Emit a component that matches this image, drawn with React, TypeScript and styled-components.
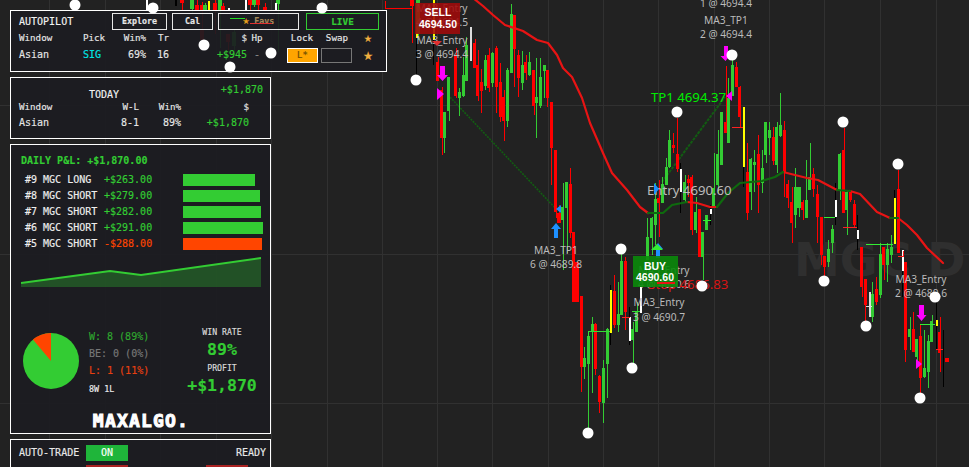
import React from "react";
import styled, { createGlobalStyle } from "styled-components";

const GlobalStyle = createGlobalStyle`
  html, body { margin: 0; padding: 0; background: #222222; }
  body { width: 969px; height: 467px; overflow: hidden; }
`;

const GREEN = "#33cc33";
const ORANGE = "#ff4500";
const MONO = `"DejaVu Sans Mono", "Liberation Mono", monospace`;

// x, wick top, wick bottom, body top, body bottom, colour
type Candle = [number, number, number, number, number, "r" | "g"];

const candles: Candle[] = [
  // strip above and behind the autopilot panel
  [182, -2, 10, -2, 3, "r"], [192, -2, 14, -2, 9, "g"], [197, -2, 11, 5, 10, "r"], [202, 2, 30, 5, 10, "r"],
  [205, 3, 11, 5, 10, "g"], [215, -2, 34, 3, 10, "r"], [220, -2, 48, -2, 10, "g"], [223, 3, 11, 6, 10, "r"],
  [250, -2, 10, -2, 5, "r"], [254, -2, 7, -2, 5, "g"], [258, -2, 12, -2, 5, "r"], [265, 3, 11, 7, 10, "r"], [278, -2, 52, -2, 4, "g"],
  [202, 30, 50, 30, 40, "r"], [234, 30, 55, 32, 46, "g"], [228, 34, 50, 34, 42, "r"],
  // left cluster
  [412, -2, 43, -2, 6, "r"], [418, -2, 40, -2, 34, "g"], [437.6, 57, 81, 62, 81, "r"], [441.7, 87, 155, 90, 138, "r"],
  [444.3, 112, 153, 112, 138, "g"], [448.7, 77, 121, 77, 111, "g"], [455.7, 48, 98, 55, 96, "r"], [459.3, 88, 116, 92, 98, "g"],
  [463.3, 57, 97, 75, 96, "g"], [466.3, 37, 81, 45, 81, "g"], [474.7, 39, 68, 43, 68, "r"], [477.7, 50, 101, 65, 96, "r"],
  [481.3, 69, 113, 82, 91, "r"], [485.3, 55, 90, 60, 86, "g"], [488.7, 48, 92, 55, 88, "r"], [492.3, 52, 87, 53, 83, "g"],
  [496.3, 46, 113, 48, 87, "r"], [500.3, 63, 122, 82, 117, "r"], [503.7, 90, 141, 97, 121, "r"], [507.3, 68, 127, 70, 121, "g"],
  [511.3, 4, 73, 14, 73, "g"], [514.3, 15, 87, 15, 49, "r"], [518.3, 50, 97, 55, 78, "r"], [522.3, 51, 90, 65, 83, "g"],
  [525.7, 55, 80, 62, 73, "r"], [529.3, 52, 76, 62, 75, "g"], [533.7, 70, 115, 70, 106, "r"], [536.3, 58, 138, 97, 103, "g"],
  [540.3, 58, 108, 77, 106, "g"], [544.3, 65, 98, 65, 71, "g"], [547.3, 70, 107, 70, 98, "r"], [551.3, 102, 185, 102, 148, "r"],
  [555.7, 150, 218, 150, 212, "r"], [559, 205, 223, 213, 223, "r"], [562.7, 183, 270, 207, 220, "g"], [566.5, 182, 253, 182, 208, "g"],
  [570.3, 168, 238, 184, 233, "r"], [573.3, 232, 302, 232, 302, "r"], [577, 262, 302, 262, 302, "r"],
  // dip
  [581.3, 296, 392, 296, 367, "r"], [584.3, 347, 379, 358, 367, "g"], [588.3, 336, 428, 336, 364, "g"], [592.3, 317, 393, 324, 332, "g"],
  [595.3, 323, 375, 324, 369, "r"], [599.3, 375, 413, 376, 402, "r"], [603.3, 360, 423, 368, 403, "g"], [607.3, 328, 398, 329, 364, "g"],
  [614.3, 275, 328, 291, 325, "r"], [618.3, 282, 332, 314, 325, "g"], [621.3, 254, 315, 261, 315, "g"], [625.3, 257, 330, 261, 312, "r"],
  [632.7, 322, 363, 329, 340, "g"], [636.7, 302, 332, 311, 332, "g"],
  // recovery
  [647.3, 218, 260, 237, 260, "g"], [651.7, 217, 255, 218, 238, "g"], [655.3, 183, 245, 199, 225, "g"], [658.7, 180, 237, 198, 203, "r"],
  [662.3, 177, 203, 184, 203, "g"], [666.3, 158, 185, 167, 185, "g"], [669.3, 130, 168, 140, 167, "g"], [673.3, 133, 153, 145, 148, "r"],
  [677.3, 118, 172, 154, 169, "r"], [684.7, 175, 203, 182, 200, "g"], [688.3, 175, 197, 179, 183, "r"], [691.7, 175, 235, 177, 230, "r"],
  [695.7, 197, 233, 212, 230, "g"], [699.3, 209, 257, 209, 257, "r"], [702.7, 232, 280, 232, 257, "g"], [706.3, 215, 230, 215, 230, "g"],
  [713.7, 153, 207, 188, 207, "g"], [717.7, 130, 193, 154, 185, "g"], [721.3, 112, 165, 112, 165, "g"], [725.7, 66, 133, 122, 133, "r"],
  [728.3, 78, 143, 98, 143, "g"], [732.3, 60, 96, 65, 96, "g"], [736.3, 62, 87, 67, 87, "r"], [739.7, 86, 127, 87, 117, "r"],
  // middle
  [747.3, 143, 220, 172, 213, "r"], [750.7, 158, 210, 159, 192, "g"], [754.3, 150, 192, 162, 165, "g"], [758.3, 135, 213, 154, 185, "r"],
  [762.3, 150, 193, 168, 183, "g"], [765.7, 122, 163, 122, 155, "g"], [769.3, 122, 155, 130, 138, "g"], [773.3, 127, 165, 137, 161, "r"],
  [776.7, 122, 173, 127, 165, "g"], [780.3, 93, 137, 125, 136, "g"], [784.3, 121, 197, 130, 173, "r"], [787.7, 180, 208, 184, 198, "r"],
  [791.7, 187, 243, 202, 223, "r"], [795.3, 168, 228, 187, 215, "g"], [799, 187, 217, 187, 208, "g"], [802.7, 200, 220, 202, 210, "r"],
  [806.3, 160, 218, 200, 218, "g"], [809.7, 143, 190, 177, 190, "g"], [813.3, 168, 197, 174, 189, "r"], [817.3, 185, 243, 194, 217, "r"],
  [821.3, 217, 265, 217, 255, "r"], [824.3, 256, 278, 256, 267, "r"], [828.3, 240, 267, 249, 262, "g"], [832.3, 225, 253, 229, 243, "g"],
  [839.7, 153, 200, 154, 191, "g"], [843.7, 128, 213, 150, 213, "r"], [846.7, 190, 235, 192, 210, "g"], [850.3, 190, 202, 191, 200, "r"],
  [854.3, 200, 227, 204, 225, "r"], [898.3, 170, 253, 189, 253, "r"],
  // right cluster
  [861.7, 247, 297, 247, 287, "r"], [865.3, 279, 323, 279, 305, "r"], [872.3, 282, 322, 294, 317, "g"], [876.3, 277, 305, 289, 302, "r"],
  [880.3, 243, 298, 254, 295, "g"], [883.7, 247, 280, 247, 265, "r"], [887.3, 243, 282, 249, 265, "g"], [891.3, 235, 263, 247, 255, "g"],
  [905.3, 262, 362, 262, 350, "r"], [909.7, 317, 350, 329, 337, "g"], [913.3, 312, 352, 329, 352, "r"], [916.7, 339, 367, 339, 357, "g"],
  [920.3, 325, 393, 336, 378, "r"], [924.3, 330, 378, 368, 377, "g"], [928.3, 335, 388, 341, 372, "g"], [931.7, 315, 342, 321, 342, "g"],
  [939.7, 317, 372, 332, 353, "r"],
];

// x, dark top, dark bottom, inner top, inner bottom, inner colour
const ticks: [number, number, number, number, number, string][] = [
  [146, -2, 10, -2, 10, "#ffffff"], [175, -2, 6, -2, 6, "#000000"], [208, 1, 14, 1, 10, "#ffff00"], [228, 8, 16, 8, 11, "#ffffff"],
  [245, -2, 10, -2, 10, "#ffffff"], [275, 3, 22, 3, 10, "#ffffff"],
  [416, 34, 80, 33, 38, "#ffff00"], [433, 40, 65, 0, 40, "#ffff00"], [470, 27, 61, 27, 61, "#dddddd"],
  [610, 285, 345, 290, 333, "#ffff00"], [629, 307, 345, 317, 341, "#ffffff"], [640, 287, 313, 287, 313, "#ffffff"],
  [680, 163, 213, 169, 192, "#ffffff"], [710, 205, 225, 209, 214, "#ffffff"], [743, 107, 187, 107, 167, "#ffff00"],
  [835, 183, 225, 200, 217, "#ffffff"], [857, 215, 250, 230, 239, "#ffffff"], [894, 190, 244, 198, 244, "#ffff00"],
  [902, 250, 297, 250, 271, "#ffffff"], [869, 292, 317, 292, 317, "#dddddd"], [936, 297, 350, 320, 326, "#ffff00"], [943, 330, 387, 330, 330, "#000000"],
];

const segments: [number, number, number, number, string][] = [
  [385, 8, 412, 8, "#ff0000"], [385, 0, 385, 8, "#ff0000"], [588, 331, 610, 331, "#33dd33"], [588, 331, 588, 336, "#33dd33"],
  [622, 317, 630, 317, "#ff2020"], [632, 311, 640, 311, "#33dd33"], [703, 220, 711, 220, "#33ee33"], [706, 217, 706, 223, "#33ee33"],
  [732, 127, 743, 127, "#ff2020"], [824, 217, 835, 217, "#33ee33"], [843, 227, 857, 227, "#ff2020"], [866, 244, 893, 244, "#33ee33"],
  [898, 256, 903, 256, "#ff2020"], [903, 256, 903, 250, "#ff2020"], [920, 324, 935, 324, "#33ee33"], [936, 349, 943, 349, "#ff2020"],
  [866, 306, 872, 306, "#dddddd"],
];

const maRedA = "473,-2 483,6 493,15 505,25 523,31 537,40 548,43 557,55 563,68 572,77 582,98 590,123 603,153 612,173 627,190 640,207 648,213";
const maGreenA = "648,213 663,213 672,205 687,202";
const maRedB = "687,202 697,203 710,207 717,207";
const maGreenB = "717,207 728,193 740,183 762,181 775,177 783,172";
const maRedC = "783,172 807,178 818,180 837,190";
const maGreenC = "837,190 850,191";
const maRedD = "850,191 860,194 877,212 890,218";
const maGreenD = "890,218 898,218";
const maRedE = "898,218 907,225 917,235 927,248 943,263";

const gridX = [49, 105, 160, 216, 271, 327, 382, 437, 492, 548, 603, 658, 714, 769, 824, 880, 936];
const gridY = [105, 254, 403];

const dots = [
  [75, 5], [153, 8], [322, 8], [204, 45], [271, 53], [230, 67], [416, 80], [677, 112], [732, 55], [843, 122], [898, 164],
  [824, 281], [866, 326], [920, 398], [935, 297], [702, 286], [621, 249], [632, 368], [588, 433],
];

const chartLabels: [number, number, string][] = [
  [442, 12, "MA3_Entry"], [442, 26, "4 @ 4694.5"], [442, 44, "MA3_Entry"], [442, 58, "3 @ 4694.4"],
  [726, 7, "1 @ 4694.4"], [726, 24, "MA3_TP1"], [726, 38, "2 @ 4694.4"],
  [556, 254, "MA3_TP1"], [556, 268, "6 @ 4689.8"], [664, 274, "MA3_Entry"], [664, 288, "4 @ 4690.6"],
  [659, 306, "MA3_Entry"], [659, 321, "3 @ 4690.7"], [921, 283, "MA3_Entry"], [921, 297, "2 @ 4689.6"],
];

const bars = [
  { label: "#9 MGC LONG", amount: "+$263.00", width: 72, loss: false },
  { label: "#8 MGC SHORT", amount: "+$279.00", width: 77, loss: false },
  { label: "#7 MGC SHORT", amount: "+$282.00", width: 78, loss: false },
  { label: "#6 MGC SHORT", amount: "+$291.00", width: 80, loss: false },
  { label: "#5 MGC SHORT", amount: "-$288.00", width: 79, loss: true },
];

const Page = styled.div`
  position: relative;
  width: 969px;
  height: 467px;
  overflow: hidden;
  background: #222222;
  font-family: ${MONO};
`;

const ChartSvg = styled.svg`
  position: absolute;
  inset: 0;
`;

const OverlaySvg = styled.svg`
  position: absolute;
  inset: 0;
  z-index: 3;
  pointer-events: none;
`;

const Sidebar = styled.div`
  position: absolute;
  top: 10px;
  left: 10px;
  z-index: 2;
  display: flex;
  flex-direction: column;
  align-items: flex-start;
  gap: 5px;
`;

const Panel = styled.div<{ $w?: number; $h: number }>`
  box-sizing: border-box;
  width: ${(p) => p.$w ?? 261}px;
  height: ${(p) => p.$h}px;
  flex: none;
  border: 1px solid #ffffff;
  background: rgba(28, 28, 33, 0.93);
  color: #eeeeee;
  font-size: 10px;
  line-height: 12px;
  -webkit-text-stroke: 0.15px currentColor;
`;

const PilotTop = styled.div`
  display: flex;
  align-items: center;
  height: 17px;
  margin: 2px 0 0 8px;
`;

const PilotTitle = styled.div`
  width: 93px;
  color: #f2f2f2;
`;

const TopButton = styled.div<{ $w: number; $live?: boolean; $faded?: boolean; $gap?: number }>`
  box-sizing: border-box;
  width: ${(p) => p.$w}px;
  height: 17px;
  margin-right: ${(p) => p.$gap ?? 5}px;
  border: 1px solid ${(p) => (p.$live ? GREEN : "#e8e8e8")};
  color: ${(p) => (p.$live ? GREEN : p.$faded ? "#a58a5c" : "#e8e8e8")};
  font-size: ${(p) => (p.$live ? 9.4 : 8.3)}px;
  font-weight: bold;
  line-height: 15px;
  text-align: center;
  white-space: nowrap;
`;

const FavStar = styled.span`
  font-size: 11px;
  line-height: 10px;
  color: #e6a21e;
`;

const PilotGrid = styled.div`
  display: grid;
  grid-template-columns: 64px 37px 26px 23px 78px 20px 51px 34px 32px;
  grid-template-rows: 13px 16px;
  row-gap: 3px;
  align-items: center;
  margin: 1px 0 0 8px;
`;

const Head = styled.div<{ $align?: string; $inset?: number }>`
  padding-right: ${(p) => p.$inset ?? 0}px;
  font-size: 9.2px;
  color: #e6e6e6;
  text-align: ${(p) => p.$align ?? "left"};
  white-space: nowrap;
`;

const Cell = styled.div<{ $align?: string; $tone?: string }>`
  color: ${(p) => p.$tone ?? "#e6e6e6"};
  text-align: ${(p) => p.$align ?? "left"};
  white-space: nowrap;
`;

const LockBox = styled.div`
  justify-self: end;
  box-sizing: border-box;
  width: 31px;
  height: 15px;
  border: 1px solid #ffffff;
  background: #ffa500;
  color: #6b4a00;
  font-size: 9px;
  line-height: 13px;
  text-align: center;
`;

const SwapBox = styled.div`
  justify-self: end;
  box-sizing: border-box;
  width: 31px;
  height: 15px;
  border: 1px solid #777777;
`;

const Star = styled.div<{ $size: number }>`
  color: #f0b040;
  font-size: ${(p) => p.$size}px;
  line-height: 12px;
  text-align: center;
`;

const TodayTop = styled.div`
  display: flex;
  justify-content: space-between;
  padding: 6px 7px 0 78px;
  height: 14px;
`;

const TodayTitle = styled.div`
  margin-top: 5px;
  color: #f2f2f2;
`;

const TodayTotal = styled.div`
  color: ${GREEN};
`;

const TodayGrid = styled.div`
  display: grid;
  grid-template-columns: 60px 60px 42px 68px;
  grid-template-rows: 13px 16px;
  row-gap: 2px;
  align-items: center;
  margin: 2px 0 0 8px;
`;

const DailyTitle = styled.div`
  padding: 10px 0 0 10px;
  color: ${GREEN};
  font-weight: bold;
`;

const BarList = styled.div`
  display: flex;
  flex-direction: column;
  gap: 4px;
  margin: 7px 0 0 14px;
`;

const BarRow = styled.div`
  display: grid;
  grid-template-columns: 79px 79px 1fr;
  align-items: center;
  height: 12px;
`;

const BarLabel = styled.div`
  color: #eeeeee;
  white-space: nowrap;
`;

const BarAmount = styled.div<{ $loss: boolean }>`
  color: ${(p) => (p.$loss ? ORANGE : GREEN)};
`;

const BarFill = styled.div<{ $loss: boolean }>`
  height: 12px;
  background: ${(p) => (p.$loss ? ORANGE : GREEN)};
`;

const Spark = styled.svg`
  display: block;
  margin: 7px 0 0 10px;
`;

const StatsRow = styled.div`
  display: flex;
  align-items: flex-start;
  margin-top: 38px;
`;

const Pie = styled.svg`
  flex: none;
  margin: 8px 0 0 12px;
`;

const Legend = styled.div`
  display: flex;
  flex-direction: column;
  width: 91px;
  margin: 5px 0 0 10px;
`;

const LegendLine = styled.div<{ $tone: string }>`
  height: 17px;
  line-height: 14px;
  color: ${(p) => p.$tone};
  white-space: nowrap;
`;

const Tally = styled.div`
  margin-top: 1px;
  font-size: 8.4px;
  line-height: 14px;
  color: #eeeeee;
`;

const Rates = styled.div`
  display: flex;
  flex-direction: column;
  align-items: center;
  width: 84px;
  margin-top: 2px;
`;

const RateLabel = styled.div`
  font-size: 8.2px;
  line-height: 10px;
  color: #dddddd;
  white-space: nowrap;
`;

const RateValue = styled.div`
  margin: 3px 0;
  font-size: 16.5px;
  font-weight: bold;
  line-height: 20px;
  color: ${GREEN};
  white-space: nowrap;
`;

const Logo = styled.div`
  margin-top: 13px;
  padding-left: 1px;
  text-align: center;
  font-size: 18px;
  font-weight: bold;
  line-height: 18px;
  letter-spacing: 1.2px;
  color: #ffffff;
  -webkit-text-stroke: 1px #ffffff;
`;

const TradeRow = styled.div`
  display: grid;
  grid-template-columns: 67px 42px 1fr;
  align-items: center;
  height: 16px;
  margin: 5px 4px 0 8px;
  color: #e8e8e8;
`;

const OnButton = styled.div`
  height: 16px;
  background: #1fb53a;
  color: #ffffff;
  line-height: 15px;
  text-align: center;
`;

const ReadyText = styled.div`
  text-align: right;
`;

const ActionRow = styled.div`
  display: flex;
  gap: 78px;
  margin: 4px 0 0 75px;
`;

const ActionButton = styled.div`
  width: 42px;
  height: 16px;
  background: #aa2222;
`;

const ChartLabel = styled.text`
  font-family: "Noto Sans", "Open Sans", sans-serif;
  font-size: 10.2px;
  fill: #bbbbbb;
  text-anchor: middle;
`;

const PriceLabel = styled.text<{ $tone: string }>`
  font-family: "Noto Sans", "Open Sans", sans-serif;
  font-size: 13.2px;
  fill: ${(p) => p.$tone};
`;

const Watermark = styled.text`
  font-family: "DejaVu Sans", sans-serif;
  font-size: 46px;
  font-weight: bold;
  fill: #2f2f2f;
`;

const FlagText = styled.text`
  font-family: "Liberation Sans", sans-serif;
  font-size: 10.5px;
  font-weight: bold;
  fill: #ffffff;
  text-anchor: middle;
`;

function Chart() {
  return (
    <ChartSvg width={969} height={467} viewBox="0 0 969 467">
      <g stroke="#313131" strokeWidth={1} shapeRendering="crispEdges">
        {gridX.map((x) => (
          <line key={x} x1={x + 0.5} y1={0} x2={x + 0.5} y2={467} />
        ))}
        {gridY.map((y) => (
          <line key={y} x1={0} y1={y + 0.5} x2={969} y2={y + 0.5} />
        ))}
      </g>
      <Watermark x={794} y={276}>MGC DEMO</Watermark>

      <g stroke="#125c12" strokeWidth={1.6} fill="none">
        <line x1={448} y1={95} x2={557} y2={210} strokeDasharray="2 1" />
        <line x1={662} y1={182} x2={725} y2={97} strokeWidth={2} strokeDasharray="3 1" />
      </g>

      <g shapeRendering="crispEdges">
        {candles.map(([x, wt, wb, bt, bb, c], i) => {
          const color = c === "r" ? "#ff0000" : GREEN;
          const left = Math.round(x - 1.75);
          const right = Math.round(x + 1.75);
          return (
            <g key={i} fill={color}>
              <rect x={Math.round(x)} y={wt} width={1} height={wb - wt} />
              <rect x={left} y={bt} width={right - left} height={bb - bt} />
            </g>
          );
        })}
        {ticks.map(([x, t, b, it, ib, c], i) => (
          <g key={i}>
            <rect x={x} y={t} width={1} height={b - t} fill="#000000" />
            <rect x={x} y={it} width={2} height={ib - it} fill={c} />
          </g>
        ))}
        {segments.map(([x1, y1, x2, y2, c], i) => (
          <line key={i} x1={x1} y1={y1 + 0.5} x2={x2} y2={y2 + 0.5} stroke={c} strokeWidth={1} />
        ))}
        <rect x={945} y={358} width={4} height={4} fill="#ff0000" />
      </g>

      <g fill="none" strokeWidth={2.2} strokeLinejoin="round" strokeLinecap="round">
        {[maRedA, maRedB, maRedC, maRedD, maRedE].map((p) => (
          <polyline key={p} points={p} stroke="#e81414" />
        ))}
        {[maGreenA, maGreenB, maGreenC, maGreenD].map((p) => (
          <polyline key={p} points={p} stroke="#0e6a0e" />
        ))}
      </g>

      {chartLabels.map(([x, y, t]) => (
        <ChartLabel key={`${x}-${y}`} x={x} y={y}>{t}</ChartLabel>
      ))}

      <PriceLabel $tone="#00ee00" x={651} y={102}>TP1 4694.37</PriceLabel>
      <PriceLabel $tone="#bbbbbb" x={647} y={195}>Entry 4690.60</PriceLabel>
      <PriceLabel $tone="#d81414" x={648} y={289}>Stop 4686.83</PriceLabel>

      {/* arrows */}
      <g fill="#ff00ff">
        <path d="M440 66h5v9h3l-5.500 6-5.500-6h3z" />
        <path d="M437 88l7 6-7 6z" />
        <path d="M724 46h4v10h1.500l-4 5-5-5h3.500z" />
        <path d="M732 91l-6 5 6 5z" />
        <path d="M919 305h5v10h2.500l-5 6-5-6h2.500z" />
        <path d="M916 359l6 5-6 5z" />
      </g>
      <g fill="#1e90ff">
        <path d="M554 238v-9h-3l5-6 5 6h-3v9z" />
        <path d="M561 205l-5 4 5 4z" />
        <path d="M654 183l5 6-5 6z" />
        <path d="M656 258v-9h-3l5-6 5 6h-3v9z" />
      </g>
      <path d="M651 250l6-6 6 6z" fill="#33ee33" />
      <path d="M432 41h10l-5 5z" fill="#e03030" />

      {/* order flags */}
      <rect x={415} y={3} width={45} height={31} fill="#a00a0a" fillOpacity={0.88} />
      <FlagText x={438} y={16}>SELL</FlagText>
      <FlagText x={438} y={28}>4694.50</FlagText>
      <rect x={633} y={256} width={45} height={31} fill="#0a8a0a" fillOpacity={0.9} />
      <FlagText x={655} y={270}>BUY</FlagText>
      <FlagText x={655} y={281}>4690.60</FlagText>
      <rect x={657} y={282} width={18} height={2} fill="#e81414" />
    </ChartSvg>
  );
}

function Overlay() {
  return (
    <OverlaySvg width={969} height={467} viewBox="0 0 969 467">
      <line x1={230} y1={18.5} x2={245} y2={18.5} stroke="#22dd22" strokeWidth={1} />
      <line x1={250} y1={23.5} x2={272} y2={23.5} stroke="#e03030" strokeWidth={1} />
      {dots.map(([x, y]) => (
        <circle key={`${x}-${y}`} cx={x} cy={y} r={5.5} fill="#ffffff" />
      ))}
    </OverlaySvg>
  );
}

function AutopilotPanel() {
  return (
    <Panel $w={377} $h={62}>
      <PilotTop>
        <PilotTitle>AUTOPILOT</PilotTitle>
        <TopButton $w={55}>Explore</TopButton>
        <TopButton $w={41}>Cal</TopButton>
        <TopButton $w={81} $faded $gap={7}>
          <FavStar>★</FavStar> Favs
        </TopButton>
        <TopButton $w={73} $live>LIVE</TopButton>
      </PilotTop>
      <PilotGrid>
        <Head>Window</Head>
        <Head>Pick</Head>
        <Head $align="right">Win%</Head>
        <Head $align="right">Tr</Head>
        <Head $align="right">$</Head>
        <Head $align="center">Hp</Head>
        <Head $align="right" $inset={5}>Lock</Head>
        <Head $align="right" $inset={4}>Swap</Head>
        <Star $size={13}>★</Star>
        <Cell>Asian</Cell>
        <Cell $tone="#00e5e5">SIG</Cell>
        <Cell $align="right">69%</Cell>
        <Cell $align="right">16</Cell>
        <Cell $align="right" $tone={GREEN}>+$945</Cell>
        <Cell $align="center" $tone="#888888">-</Cell>
        <LockBox>L*</LockBox>
        <SwapBox />
        <Star $size={16}>★</Star>
      </PilotGrid>
    </Panel>
  );
}

function TodayPanel() {
  return (
    <Panel $h={62}>
      <TodayTop>
        <TodayTitle>TODAY</TodayTitle>
        <TodayTotal>+$1,870</TodayTotal>
      </TodayTop>
      <TodayGrid>
        <Head>Window</Head>
        <Head $align="right">W-L</Head>
        <Head $align="right">Win%</Head>
        <Head $align="right">$</Head>
        <Cell>Asian</Cell>
        <Cell $align="right">8-1</Cell>
        <Cell $align="right">89%</Cell>
        <Cell $align="right" $tone={GREEN}>+$1,870</Cell>
      </TodayGrid>
    </Panel>
  );
}

function DailyPanel() {
  return (
    <Panel $h={290}>
      <DailyTitle>DAILY P&amp;L: +$1,870.00</DailyTitle>
      <BarList>
        {bars.map((b) => (
          <BarRow key={b.label + b.amount}>
            <BarLabel>{b.label}</BarLabel>
            <BarAmount $loss={b.loss}>{b.amount}</BarAmount>
            <BarFill $loss={b.loss} style={{ width: b.width }} />
          </BarRow>
        ))}
      </BarList>
      <Spark width={240} height={30} viewBox="0 0 240 30">
        <path d="M0 26L89 14L120 18L240 1V30H0Z" fill="#33cc33" fillOpacity={0.3} />
        <path d="M0 26L89 14L120 18L240 1" fill="none" stroke={GREEN} strokeWidth={2} />
      </Spark>
      <StatsRow>
        <Pie width={56} height={56} viewBox="0 0 56 56">
          <circle cx={28} cy={28} r={28} fill={GREEN} />
          <path d="M28 28V0A28 28 0 0 0 9.900 6.600Z" fill={ORANGE} />
        </Pie>
        <Legend>
          <LegendLine $tone="#2fa82f">W: 8 (89%)</LegendLine>
          <LegendLine $tone="#777777">BE: 0 (0%)</LegendLine>
          <LegendLine $tone="#e84010">L: 1 (11%)</LegendLine>
          <Tally>8W 1L</Tally>
        </Legend>
        <Rates>
          <RateLabel>WIN RATE</RateLabel>
          <RateValue>89%</RateValue>
          <RateLabel>PROFIT</RateLabel>
          <RateValue>+$1,870</RateValue>
        </Rates>
      </StatsRow>
      <Logo>MAXALGO.</Logo>
    </Panel>
  );
}

function AutoTradePanel() {
  return (
    <Panel $h={60}>
      <TradeRow>
        <div>AUTO-TRADE</div>
        <OnButton>ON</OnButton>
        <ReadyText>READY</ReadyText>
      </TradeRow>
      <ActionRow>
        <ActionButton />
        <ActionButton />
      </ActionRow>
    </Panel>
  );
}

export default function App() {
  return (
    <Page>
      <GlobalStyle />
      <Chart />
      <Sidebar>
        <AutopilotPanel />
        <TodayPanel />
        <DailyPanel />
        <AutoTradePanel />
      </Sidebar>
      <Overlay />
    </Page>
  );
}
